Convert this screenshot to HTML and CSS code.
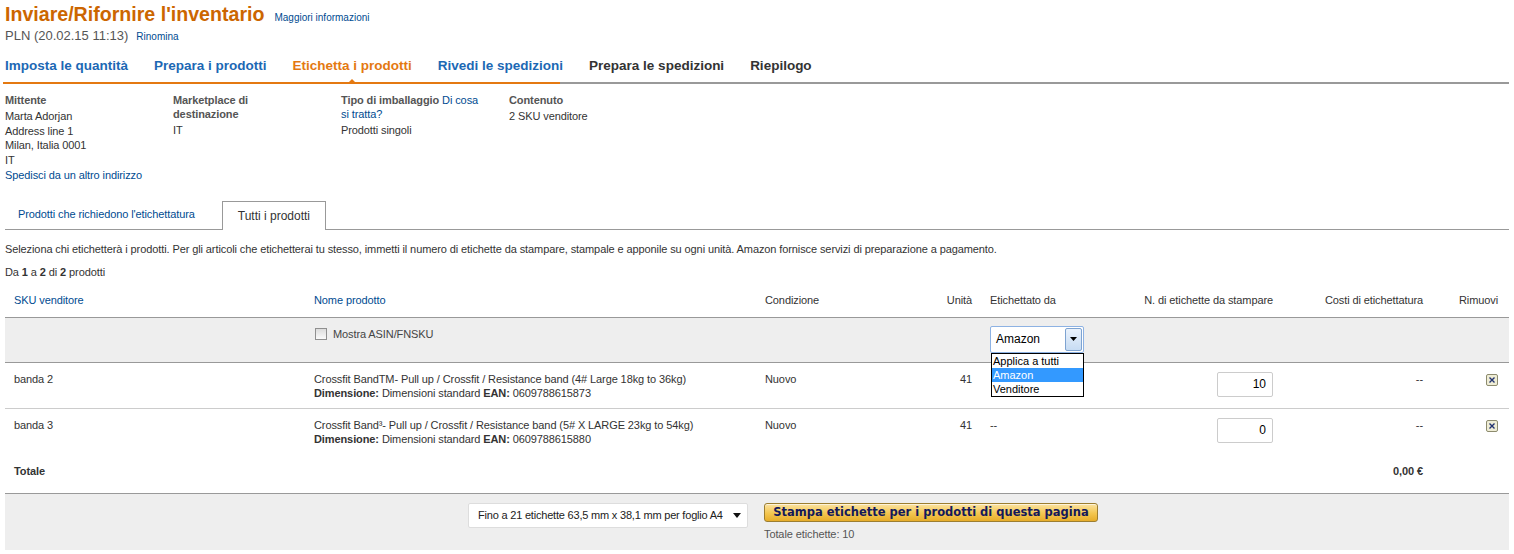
FILE: index.html
```html
<!DOCTYPE html>
<html lang="it">
<head>
<meta charset="utf-8">
<title>Inviare/Rifornire l'inventario</title>
<link rel="stylesheet" href="styles.css">
</head>
<body>
<div class="page">
  <header class="head">
    <div class="title-line">
      <h1 class="title">Inviare/Rifornire l'inventario</h1>
      <a class="small-link" href="#">Maggiori informazioni</a>
    </div>
    <div class="sub-line">
      <span class="plan">PLN (20.02.15 11:13)</span>
      <a class="small-link" href="#">Rinomina</a>
    </div>
  </header>

  <nav class="steps">
    <ul class="step-list">
      <li class="step done">Imposta le quantità</li>
      <li class="step done">Prepara i prodotti</li>
      <li class="step current">Etichetta i prodotti</li>
      <li class="step done">Rivedi le spedizioni</li>
      <li class="step todo">Prepara le spedizioni</li>
      <li class="step todo">Riepilogo</li>
    </ul>
    <div class="progress"><div class="progress-done"></div></div>
  </nav>

  <section class="info">
    <div class="info-col">
      <div class="info-head">Mittente</div>
      <div class="info-line">Marta Adorjan</div>
      <div class="info-line">Address line 1</div>
      <div class="info-line">Milan, Italia 0001</div>
      <div class="info-line">IT</div>
      <div class="info-line info-link"><a href="#">Spedisci da un altro indirizzo</a></div>
    </div>
    <div class="info-col">
      <div class="info-head">Marketplace di<br>destinazione</div>
      <div class="info-line">IT</div>
    </div>
    <div class="info-col">
      <div class="info-head">Tipo di imballaggio <a class="plain-link" href="#">Di cosa<br>si tratta?</a></div>
      <div class="info-line">Prodotti singoli</div>
    </div>
    <div class="info-col">
      <div class="info-head">Contenuto</div>
      <div class="info-line">2 SKU venditore</div>
    </div>
  </section>

  <div class="subtabs">
    <a class="subtab" href="#">Prodotti che richiedono l'etichettatura</a>
    <span class="subtab active">Tutti i prodotti</span>
  </div>

  <p class="desc">Seleziona chi etichetterà i prodotti. Per gli articoli che etichetterai tu stesso, immetti il numero di etichette da stampare, stampale e apponile su ogni unità. Amazon fornisce servizi di preparazione a pagamento.</p>
  <p class="count">Da <b>1</b> a <b>2</b> di <b>2</b> prodotti</p>

  <table class="items">
    <colgroup>
      <col class="c-sku"><col class="c-name"><col class="c-cond"><col class="c-units"><col class="c-by"><col class="c-num"><col class="c-cost"><col class="c-rm">
    </colgroup>
    <thead>
      <tr>
        <th class="link-th">SKU venditore</th>
        <th class="link-th">Nome prodotto</th>
        <th>Condizione</th>
        <th class="right">Unità</th>
        <th>Etichettato da</th>
        <th class="right">N. di etichette da stampare</th>
        <th class="right">Costi di etichettatura</th>
        <th class="right rm-cell">Rimuovi</th>
      </tr>
    </thead>
    <tbody>
      <tr class="filter-row">
        <td></td>
        <td><label class="check-label"><input type="checkbox" class="check"> Mostra ASIN/FNSKU</label></td>
        <td></td>
        <td></td>
        <td>
          <div class="select-wrap">
            <div class="fake-select"><span class="fs-text">Amazon</span><span class="fs-btn"><svg width="7" height="4" viewBox="0 0 7 4"><path d="M0 0h7L3.5 4z" fill="#000"/></svg></span></div>
            <ul class="dropdown">
              <li>Applica a tutti</li>
              <li class="sel">Amazon</li>
              <li>Venditore</li>
            </ul>
          </div>
        </td>
        <td></td>
        <td></td>
        <td></td>
      </tr>
      <tr class="item-row first">
        <td>banda 2</td>
        <td>Crossfit BandTM- Pull up / Crossfit / Resistance band (4# Large 18kg to 36kg)<br><b>Dimensione:</b> Dimensioni standard <b>EAN:</b> 0609788615873</td>
        <td>Nuovo</td>
        <td class="right">41</td>
        <td></td>
        <td class="right"><input class="qty" type="text" value="10"></td>
        <td class="right">--</td>
        <td class="right rm-cell"><svg class="rm" width="12" height="12" viewBox="0 0 12 12"><rect x="0.5" y="0.5" width="11" height="11" rx="1.5" fill="#efedd6" stroke="#8d8b6e"/><path d="M3.5 3.5l5 5M8.5 3.5l-5 5" stroke="#23336f" stroke-width="1.4"/></svg></td>
      </tr>
      <tr class="item-row">
        <td>banda 3</td>
        <td>Crossfit Band³- Pull up / Crossfit / Resistance band (5# X LARGE 23kg to 54kg)<br><b>Dimensione:</b> Dimensioni standard <b>EAN:</b> 0609788615880</td>
        <td>Nuovo</td>
        <td class="right">41</td>
        <td>--</td>
        <td class="right"><input class="qty" type="text" value="0"></td>
        <td class="right">--</td>
        <td class="right rm-cell"><svg class="rm" width="12" height="12" viewBox="0 0 12 12"><rect x="0.5" y="0.5" width="11" height="11" rx="1.5" fill="#efedd6" stroke="#8d8b6e"/><path d="M3.5 3.5l5 5M8.5 3.5l-5 5" stroke="#23336f" stroke-width="1.4"/></svg></td>
      </tr>
      <tr class="total-row">
        <td>Totale</td>
        <td></td><td></td><td></td><td></td><td></td>
        <td class="right">0,00 €</td>
        <td></td>
      </tr>
    </tbody>
  </table>

  <div class="footer-bar">
    <div class="sheet-select"><span class="sheet-text">Fino a 21 etichette 63,5 mm x 38,1 mm per foglio A4</span><svg width="8" height="5" viewBox="0 0 8 5"><path d="M0 0h8L4 5z" fill="#111"/></svg></div>
    <div class="print-group">
      <button class="print-btn" type="button">Stampa etichette per i prodotti di questa pagina</button>
      <div class="total-labels">Totale etichette: 10</div>
    </div>
  </div>
</div>
</body>
</html>
```
FILE: styles.css
```css
* { box-sizing: border-box; }

body {
  margin: 0;
  font-family: "Liberation Sans", Arial, sans-serif;
  font-size: 11px;
  letter-spacing: -0.1px;
  color: #333;
  background: #fff;
}

a { color: #004b91; text-decoration: none; }

.page { padding: 0 5px; }

/* header */
.title-line {
  display: flex;
  align-items: baseline;
  gap: 10px;
  padding-top: 2px;
}
.title {
  margin: 0;
  font-size: 19.6px;
  line-height: 24px;
  font-weight: bold;
  letter-spacing: 0;
  color: #cc6600;
}
.small-link { font-size: 10px; letter-spacing: 0; }
.sub-line {
  display: flex;
  align-items: baseline;
  gap: 8px;
  margin-top: 2px;
}
.plan { font-size: 13px; line-height: 16px; color: #555; letter-spacing: 0; }

/* steps */
.steps { margin-top: 14px; }
.step-list {
  list-style: none;
  margin: 0;
  padding: 0;
  display: flex;
  gap: 26px;
}
.step {
  position: relative;
  font-size: 13.5px;
  line-height: 16px;
  font-weight: bold;
  letter-spacing: 0;
  padding-bottom: 8px;
}
.step.done { color: #1c68b4; }
.step.current { color: #e47911; }
.step.todo { color: #333; }
.step.current::after {
  content: "";
  position: absolute;
  left: 50%;
  bottom: 0;
  margin-left: -3px;
  border-left: 3px solid transparent;
  border-right: 3px solid transparent;
  border-bottom: 3px solid #e47911;
}
.progress {
  height: 2px;
  background: #999;
  margin-left: -2px;
}
.progress-done {
  width: 557px;
  height: 2px;
  background: #e47911;
}

/* info */
.info {
  display: flex;
  margin-top: 9px;
}
.info-col { width: 168px; }
.info-head {
  font-weight: bold;
  color: #555;
  line-height: 14px;
  margin-bottom: 2px;
}
.plain-link { font-weight: normal; }
.info-line { line-height: 14.5px; }
.info-link { margin-top: 1px; }

/* sub tabs */
.subtabs {
  display: flex;
  margin-top: 18px;
  height: 29px;
  border-bottom: 1px solid #999;
}
.subtab {
  padding: 0 13px;
  line-height: 26px;
  font-size: 11px;
}
.active {
  margin-left: 14px;
  font-size: 12px;
  letter-spacing: 0;
  color: #333;
  padding: 0 15px;
  line-height: 28px;
  height: 29px;
  background: #fff;
  border: 1px solid #999;
  border-bottom: none;
}

.desc { margin: 12px 0 0; line-height: 14px; }
.count { margin: 9px 0 0; line-height: 14px; }

/* table */
.items {
  width: 100%;
  border-collapse: collapse;
  table-layout: fixed;
}
.c-sku { width: 300px; }
.c-name { width: 451px; }
.c-cond { width: 145px; }
.c-units { width: 80px; }
.c-by { width: 149px; }
.c-num { width: 152px; }
.c-cost { width: 150px; }
.c-rm { width: 77px; }

.items th {
  font-weight: normal;
  text-align: left;
  color: #333;
  padding: 14px 9px 10px;
  line-height: 14px;
  border-bottom: 1px solid #999;
}
.items th.link-th { color: #004b91; }
.items .right { text-align: right; }
.items .rm-cell { padding-right: 11px; }

.items td {
  padding: 9px 9px 9px;
  line-height: 14px;
  vertical-align: top;
}
.filter-row td {
  background: #eee;
  height: 44px;
  padding-top: 8px;
  border-bottom: 1px solid #999;
}
.check-label {
  display: inline-flex;
  align-items: center;
  gap: 6px;
  margin-top: 1px;
  color: #444;
}
.check {
  appearance: none;
  -webkit-appearance: none;
  margin: 0 0 0 1px;
  width: 12px;
  height: 12px;
  border: 1px solid #8f8f8f;
  background: linear-gradient(#dcdcdc, #fafafa);
}

.select-wrap { position: relative; width: 94px; }
.fake-select {
  display: flex;
  align-items: stretch;
  height: 27px;
  border: 1px solid #8db2e3;
  border-radius: 2px;
  background: #fff;
}
.fs-text {
  flex: 1;
  font-size: 12px;
  line-height: 25px;
  padding-left: 5px;
  color: #000;
  letter-spacing: 0;
}
.fs-btn {
  width: 17px;
  margin: 1px 1px 1px 0;
  display: flex;
  align-items: center;
  justify-content: center;
  border: 1px solid #7ea3d1;
  border-radius: 2px;
  background: linear-gradient(#eaf2fc, #c7dcf3);
}
.dropdown {
  position: absolute;
  left: 1px;
  top: 27px;
  width: 93px;
  margin: 0;
  padding: 0;
  list-style: none;
  background: #fff;
  border: 1px solid #000;
  z-index: 5;
}
.dropdown li {
  font-size: 11px;
  line-height: 14px;
  color: #000;
  padding-left: 1px;
  letter-spacing: 0;
}
.dropdown li.sel { background: #3399ff; color: #fff; }

.item-row.first td { border-bottom: 1px solid #ccc; padding-bottom: 8px; }
.qty {
  width: 56px;
  height: 25px;
  border: 1px solid #ccc;
  border-radius: 2px;
  font-family: "Liberation Sans", Arial, sans-serif;
  font-size: 12px;
  text-align: right;
  padding: 0 6px 0 0;
  margin: 0;
  color: #000;
  display: inline-block;
  vertical-align: top;
}
.rm { display: inline-block; margin-top: 2px; }

.total-row td {
  font-weight: bold;
  color: #333;
  padding-top: 9px;
  padding-bottom: 15px;
}

/* footer */
.footer-bar {
  display: flex;
  justify-content: center;
  align-items: flex-start;
  gap: 16px;
  padding: 9px 0 0 52px;
  height: 57px;
  background: #eee;
  border-top: 1px solid #999;
}
.sheet-select {
  width: 280px;
  height: 25px;
  display: flex;
  align-items: center;
  justify-content: space-between;
  padding: 0 6px 0 9px;
  background: #fff;
  border: 1px solid #ddd;
  border-radius: 2px;
  color: #222;
}
.sheet-text { white-space: nowrap; letter-spacing: -0.2px; }
.print-group { display: flex; flex-direction: column; }
.print-btn {
  width: 334px;
  height: 19px;
  padding: 0;
  font-family: "DejaVu Sans", Verdana, sans-serif;
  font-size: 11.5px;
  font-weight: bold;
  letter-spacing: 0;
  color: #14195a;
  border: 1px solid #9c7e31;
  border-radius: 3px;
  background: linear-gradient(#fbe3a2, #f3c650 55%, #e7ad2a);
  box-shadow: inset 0 1px 0 rgba(255,255,255,0.6);
}
.total-labels {
  margin-top: 5px;
  line-height: 14px;
  color: #555;
}
```
